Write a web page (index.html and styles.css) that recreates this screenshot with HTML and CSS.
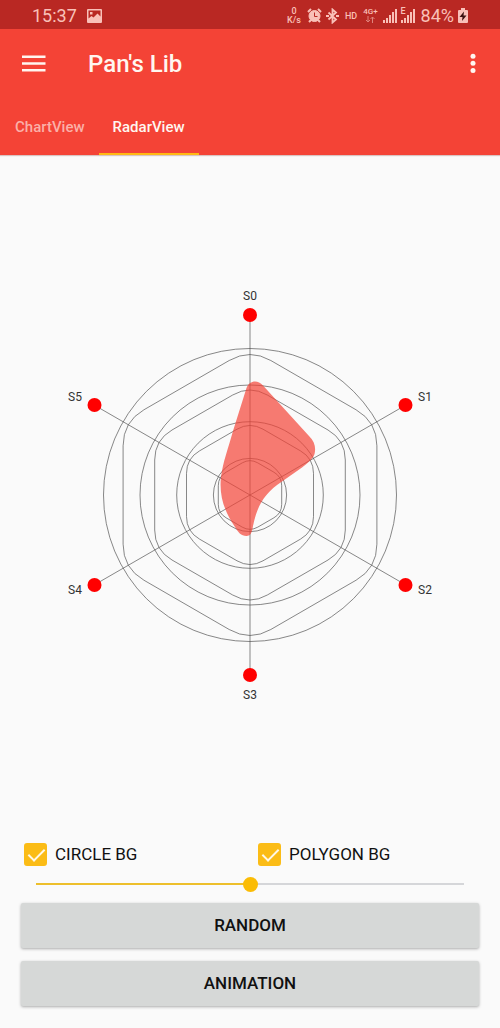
FILE: index.html
```html
<!DOCTYPE html>
<html lang="en">
<head>
<meta charset="utf-8">
<meta name="viewport" content="width=device-width, initial-scale=1">
<title>Pan's Lib</title>
<link rel="stylesheet" href="styles.css">
</head>
<body>
<div class="status">
  <span class="clock">15:37</span>
  <svg class="picture" width="15" height="14" viewBox="0 0 15 14"><path fill="currentColor" fill-rule="evenodd" d="M1 0h13q1 0 1 1v12q0 1-1 1H1q-1 0-1-1V1q0-1 1-1zM1.500 1.500v8l3-2.500 2 1.500 4-4 3 3V1.500zM3 3h2.500v2.500H3z"/></svg>
  <span class="speed"><span>0</span><span>K/s</span></span>
  <svg class="alarm" width="15" height="15" viewBox="0 0 15 15" fill="none" stroke="currentColor"><circle cx="7.500" cy="8" r="5.500" fill="currentColor" stroke-width="1"/><path stroke-width="2" d="M1 4l3-3M14 4l-3-3M4 12l-2 2M11 12l2 2"/><path class="alarm-hands" d="M7.500 4.500V8.500H10.500"/></svg>
  <svg class="bluetooth" width="13" height="16" viewBox="0 0 13 16" fill="none" stroke="currentColor" stroke-width="1.800"><path d="M2.500 4.500l7.500 7-3.500 3V1.500L10 4.500l-7.500 7"/><path d="M0 8h3M10 8h3"/></svg>
  <span class="hd">HD</span>
  <span class="network"><span>4G+</span><svg width="10" height="7" viewBox="0 0 10 7" fill="none" stroke="currentColor" opacity=".6"><path d="M3 0v6M1 4l2 2 2-2M7.500 7V1M5.500 3l2-2 2 2"/></svg></span>
  <svg class="signal" width="14" height="14" viewBox="0 0 14 14" fill="currentColor"><path d="M0 11h2v3H0zM3 9h2v5H3zM6 6h2v8H6zM9 3h2v11H9zM12 0h2v14h-2z"/></svg>
  <span class="edge"><svg width="14" height="14" viewBox="0 0 14 14" fill="currentColor"><path d="M0 11h2v3H0zM3 9h2v5H3zM6 6h2v8H6zM9 3h2v11H9zM12 0h2v14h-2z"/></svg><span class="edge-label">E</span></span>
  <span class="percent">84%</span>
  <svg class="battery" width="10" height="15" viewBox="0 0 10 15"><path fill="currentColor" d="M3 0h4v2h2q1 0 1 1v11q0 1-1 1H1q-1 0-1-1V3q0-1 1-1h2z"/><path class="bolt" d="M6 3.500L1.500 9H4.500L4 13 8.500 7.500H5.500z"/></svg>
</div>
<header class="appbar">
  <div class="toolbar">
    <button class="icon-button" type="button" aria-label="Open menu"><svg width="24" height="18" viewBox="0 0 24 18" fill="currentColor"><path d="M0 .5h23.500V3H0zM0 7.200h23.500v2.500H0zM0 14h23.500v2.500H0z"/></svg></button>
    <h1 class="title">Pan's Lib</h1>
    <button class="icon-button" type="button" aria-label="More options"><svg width="6" height="20" viewBox="0 0 6 20" fill="currentColor"><circle cx="3" cy="2.300" r="2.500"/><circle cx="3" cy="9.300" r="2.500"/><circle cx="3" cy="16.500" r="2.500"/></svg></button>
  </div>
  <nav class="tabs">
    <a class="tab" href="#chart">ChartView</a>
    <a class="tab tab-active" href="#radar" aria-current="page">RadarView</a>
  </nav>
</header>
<main class="content">
  <div class="chart">
    <svg class="radar" viewBox="60 285 380 420" role="img" aria-label="Radar chart with six axes">
      <g class="grid">
        <circle cx="250" cy="495" r="146.500"/><circle cx="250" cy="495" r="110"/><circle cx="250" cy="495" r="73.300"/><circle cx="250" cy="495" r="36.600"/>
        <path d="M250 315V675M94.100 405L405.900 585M94.100 585L405.900 405"/>
        <path d="M229.200 360.500Q250 348.500 270.800 360.500L356.100 409.800Q376.900 421.800 376.900 445.800V544.200Q376.900 568.200 356.100 580.200L270.800 629.500Q250 641.500 229.200 629.500L143.900 580.200Q123.100 568.200 123.100 544.200V445.800Q123.100 421.800 143.900 409.800Z"/>
        <path d="M232.700 395Q250 385 267.300 395L328 430Q345.300 440 345.300 460V530Q345.300 550 328 560L267.300 595Q250 605 232.700 595L172 560Q154.700 550 154.700 530V460Q154.700 440 172 430Z"/>
        <path d="M237 429.200Q250 421.700 263 429.200L300.500 450.900Q313.500 458.400 313.500 473.400V516.600Q313.500 531.600 300.500 539.100L263 560.800Q250 568.300 237 560.800L199.500 539.100Q186.500 531.600 186.500 516.600V473.400Q186.500 458.400 199.500 450.900Z"/>
        <path d="M242.200 462.900Q250 458.400 257.800 462.900L273.900 472.200Q281.700 476.700 281.700 485.700V504.300Q281.700 513.300 273.900 517.800L257.800 527.100Q250 531.600 242.200 527.100L226.100 517.800Q218.300 513.300 218.300 504.300V485.700Q218.300 476.700 226.100 472.200Z"/>
      </g>
      <path class="area" d="M246.500 388C249.500 380.500 257.500 379.500 263 385.500L309 436C315 442 316 448 314.500 454C313.500 458 308 463 302 467.500L282 481.500C263 494 257 507 253 526C252 532 251 536 246.500 536C241 536 238 532 235 527C224 511 219 495 221 477C223 462 228 449 233 431Z"/>
      <g class="dots"><circle cx="250" cy="315" r="7"/><circle cx="405.500" cy="405" r="7"/><circle cx="405.500" cy="585" r="7"/><circle cx="250" cy="675" r="7"/><circle cx="94.500" cy="585" r="7"/><circle cx="94.500" cy="405" r="7"/></g>
      <g class="labels"><text x="250" y="300">S0</text><text x="425" y="401">S1</text><text x="425" y="594">S2</text><text x="250" y="699">S3</text><text x="75" y="594">S4</text><text x="75" y="401">S5</text></g>
    </svg>
  </div>
  <div class="checks">
    <label class="check"><input class="box" type="checkbox" checked>CIRCLE BG</label>
    <label class="check"><input class="box" type="checkbox" checked>POLYGON BG</label>
  </div>
  <input class="slider" type="range" min="0" max="100" value="50" aria-label="Corner radius">
  <div class="actions">
    <button class="action" type="button">RANDOM</button>
    <button class="action" type="button">ANIMATION</button>
  </div>
</main>
</body>
</html>
```
FILE: styles.css
```css
* { box-sizing: border-box; }
body {
  margin: 0;
  min-height: 100vh;
  display: flex;
  flex-direction: column;
  background: #fafafa;
  color: #111;
  font-family: Roboto, "Liberation Sans", sans-serif;
}
svg { display: block; flex-shrink: 0; }

.status {
  height: 29px;
  padding: 2px 32px 0;
  display: flex;
  align-items: center;
  background: #b92823;
  color: #f9c0b8;
}
.clock { font-size: 18px; margin-right: 10px; }
.picture { margin-right: auto; }
.speed, .network {
  display: flex;
  flex-direction: column;
  align-items: center;
  font-weight: 500;
}
.speed { font-size: 9px; line-height: 9px; margin-right: 6px; }
.network { font-size: 8px; line-height: 8px; margin-right: 5px; }
.alarm { margin-right: 4px; }
.alarm-hands { stroke: #b92823; }
.bluetooth { margin-right: 6px; }
.hd { font-size: 9px; font-weight: 500; margin-right: 6px; }
.signal { margin-right: 4px; }
.edge { position: relative; margin-right: 6px; }
.edge-label {
  position: absolute;
  left: 0;
  top: -2px;
  font-size: 9px;
  line-height: 9px;
  font-weight: 500;
}
.percent { font-size: 18px; margin-right: 4px; }
.bolt { fill: #3a1110; }

.appbar {
  background: #f44336;
  color: #fff6f0;
  box-shadow: 0 1px 1px #d9c4c2;
}
.toolbar {
  height: 70px;
  padding: 0 16px;
  display: flex;
  align-items: center;
}
.icon-button {
  display: flex;
  justify-content: center;
  min-width: 22px;
  padding: 6px;
  border: 0;
  background: none;
  color: inherit;
}
.icon-button svg { overflow: visible; }
.title {
  flex: 1;
  margin: 0 0 0 36px;
  font-size: 24px;
  font-weight: 500;
}
.tabs { display: flex; height: 56px; padding-left: 1px; }
.tab {
  display: flex;
  align-items: center;
  padding: 2px 14px 0;
  border-bottom: 2px solid transparent;
  color: #fbb0a8;
  font-size: 15px;
  font-weight: 500;
  text-decoration: none;
}
.tab-active { color: #fff6f0; border-color: #ffb914; }

.content {
  flex: 1;
  display: flex;
  flex-direction: column;
  padding-bottom: 22px;
}
.chart {
  flex: 1;
  display: flex;
  align-items: center;
  justify-content: center;
  padding-bottom: 2px;
}
.radar { width: 76%; }
.grid { fill: none; stroke: #555; stroke-width: .7; }
.area { fill: #f44336; fill-opacity: .7; }
.dots { fill: #f00; }
.labels { fill: #333; font-size: 12px; text-anchor: middle; }

.checks {
  display: grid;
  grid-template-columns: 1fr 1fr;
  padding: 0 8px 0 24px;
}
.check {
  display: flex;
  align-items: center;
  gap: 8px;
  height: 36px;
  font-size: 17px;
}
.box {
  appearance: none;
  position: relative;
  width: 23px;
  height: 23px;
  margin: 0;
  border: 2px solid #777;
  border-radius: 3px;
}
.box:checked { background: #fbbc16; border-color: #fbbc16; }
.box:checked::after {
  content: "";
  position: absolute;
  left: 6px;
  top: 0;
  width: 7px;
  height: 14px;
  border: solid #fff8e8;
  border-width: 0 2px 2px 0;
  transform: rotate(45deg);
}
.slider {
  appearance: none;
  height: 16px;
  margin: 4px 36px 0;
  background: linear-gradient(#edbf2c, #edbf2c) left / 50% 2px no-repeat,
    linear-gradient(#d5d6d9, #d5d6d9) center / 100% 2px no-repeat;
}
.slider::-webkit-slider-thumb {
  appearance: none;
  width: 15px;
  height: 15px;
  border-radius: 50%;
  background: #fbbc05;
}
.actions {
  display: flex;
  flex-direction: column;
  gap: 13px;
  padding: 11px 21px 0;
}
.action {
  height: 45px;
  padding: 0 6px 2px;
  border: 0;
  border-radius: 2px;
  background: #d6d8d7;
  color: #111;
  box-shadow: 0 1px 3px #aaa;
  font: 500 17px Roboto, "Liberation Sans", sans-serif;
}
```
